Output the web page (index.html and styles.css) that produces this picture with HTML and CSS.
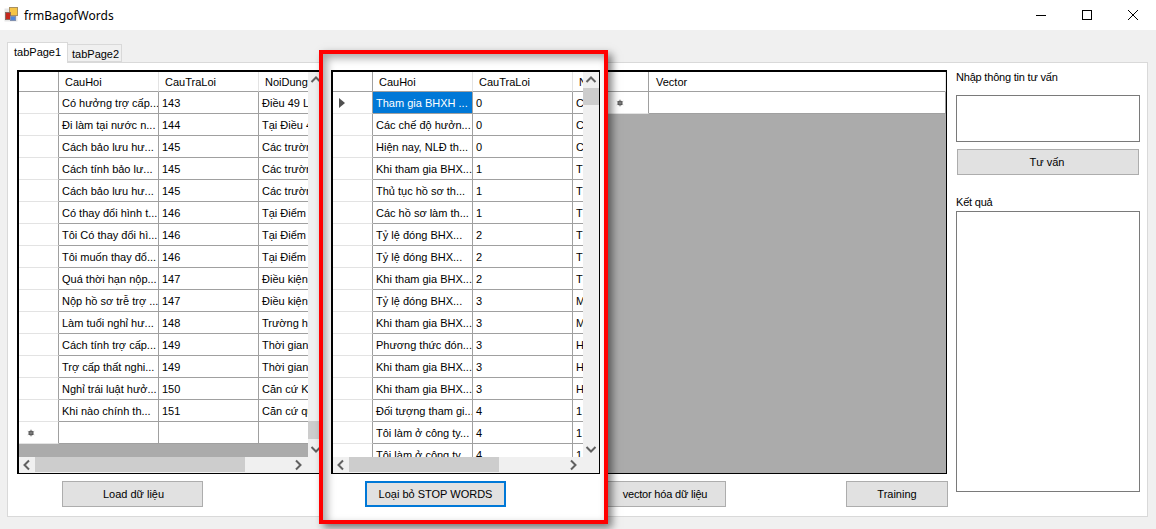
FILE: index.html
```html
<!DOCTYPE html>
<html lang="vi">
<head>
<meta charset="utf-8">
<title>frmBagofWords</title>
<link rel="stylesheet" href="styles.css">
</head>
<body>
<div class="window">
  <header class="titlebar">
    <svg class="app-icon" width="16" height="16" viewBox="0 0 16 16"><rect x="0.5" y="1.5" width="13" height="13" fill="#e6e6e6"/><rect x="5.5" y="0.5" width="8" height="8" fill="#f5c445" stroke="#a89060"/><rect x="1.5" y="5.5" width="5" height="7" fill="#c8281e" stroke="#8a6a60"/><rect x="6.5" y="9.5" width="5" height="4" fill="#4d86dc" stroke="#8090b0"/></svg>
    <span class="title">frmBagofWords</span>
    <div class="win-controls">
      <span class="win-btn"><svg width="12" height="12" viewBox="0 0 12 12"><path d="M1 6.5H11" stroke="#000" fill="none"/></svg></span>
      <span class="win-btn"><svg width="12" height="12" viewBox="0 0 12 12"><rect x="1.5" y="1.5" width="9" height="9" stroke="#000" fill="none"/></svg></span>
      <span class="win-btn"><svg width="12" height="12" viewBox="0 0 12 12"><path d="M1 1L11 11M11 1L1 11" stroke="#000" fill="none"/></svg></span>
    </div>
  </header>
  <main class="client">
    <div class="tabs">
      <span class="tab tab-active">tabPage1</span>
      <span class="tab">tabPage2</span>
    </div>
    <section class="panel">
      <div class="main-col">
        <div class="grids">
          <div class="grid grid-one">
            <div class="grid-top">
              <div class="viewport">
                <table class="dgv">
                  <thead><tr><th class="rh"></th><th>CauHoi</th><th>CauTraLoi</th><th>NoiDung</th></tr></thead>
                  <tbody>
                    <tr><th class="rh"></th><td>Có hưởng trợ cấp...</td><td>143</td><td>Điều 49 Luật</td></tr>
                    <tr><th class="rh"></th><td>Đi làm tại nước n...</td><td>144</td><td>Tại Điều 4</td></tr>
                    <tr><th class="rh"></th><td>Cách bảo lưu hư...</td><td>145</td><td>Các trường</td></tr>
                    <tr><th class="rh"></th><td>Cách tính bảo lư...</td><td>145</td><td>Các trường</td></tr>
                    <tr><th class="rh"></th><td>Cách bảo lưu hư...</td><td>145</td><td>Các trường</td></tr>
                    <tr><th class="rh"></th><td>Có thay đổi hình t...</td><td>146</td><td>Tại Điểm</td></tr>
                    <tr><th class="rh"></th><td>Tôi Có thay đổi hì...</td><td>146</td><td>Tại Điểm</td></tr>
                    <tr><th class="rh"></th><td>Tôi muốn thay đổ...</td><td>146</td><td>Tại Điểm</td></tr>
                    <tr><th class="rh"></th><td>Quá thời hạn nộp...</td><td>147</td><td>Điều kiện</td></tr>
                    <tr><th class="rh"></th><td>Nộp hồ sơ trễ trợ ...</td><td>147</td><td>Điều kiện</td></tr>
                    <tr><th class="rh"></th><td>Làm tuổi nghỉ hư...</td><td>148</td><td>Trường hợp</td></tr>
                    <tr><th class="rh"></th><td>Cách tính trợ cấp...</td><td>149</td><td>Thời gian</td></tr>
                    <tr><th class="rh"></th><td>Trợ cấp thất nghi...</td><td>149</td><td>Thời gian</td></tr>
                    <tr><th class="rh"></th><td>Nghỉ trái luật hưở...</td><td>150</td><td>Căn cứ Khoản</td></tr>
                    <tr><th class="rh"></th><td>Khi nào chính th...</td><td>151</td><td>Căn cứ quy</td></tr>
                    <tr><th class="rh"><svg class="star" width="8" height="8" viewBox="0 0 8 8"><circle cx="4" cy="4" r="2.5" fill="#444"/><path d="M4 .5V7.5M.8 2.2L7.2 5.8M7.2 2.2L.8 5.8" stroke="#888" stroke-width=".8"/></svg></th><td></td><td></td><td></td></tr>
                  </tbody>
                </table>
              </div>
              <div class="vscroll">
                <svg class="arrow" width="16" height="16" viewBox="0 0 16 16"><path d="M3.5 10L8 5.5L12.5 10" stroke="#606060" stroke-width="2" fill="none"/></svg>
                <div class="vthumb vthumb-low"></div>
                <svg class="arrow arrow-end" width="16" height="16" viewBox="0 0 16 16"><path d="M3.5 6L8 10.5L12.5 6" stroke="#606060" stroke-width="2" fill="none"/></svg>
              </div>
            </div>
            <div class="hscroll">
              <svg class="arrow" width="16" height="16" viewBox="0 0 16 16"><path d="M10 3.5L5.5 8L10 12.5" stroke="#606060" stroke-width="2" fill="none"/></svg>
              <div class="hthumb hthumb-wide"></div>
              <svg class="arrow arrow-end" width="16" height="16" viewBox="0 0 16 16"><path d="M6 3.5L10.5 8L6 12.5" stroke="#606060" stroke-width="2" fill="none"/></svg>
              <div class="corner"></div>
            </div>
          </div>

          <div class="grid grid-two">
            <div class="grid-top">
              <div class="viewport">
                <table class="dgv">
                  <thead><tr><th class="rh"></th><th>CauHoi</th><th>CauTraLoi</th><th>NoiDung</th></tr></thead>
                  <tbody>
                    <tr><th class="rh"><svg class="caret" width="6" height="10" viewBox="0 0 6 10"><path d="M0 0L6 5L0 10Z" fill="#505050"/></svg></th><td class="selected">Tham gia BHXH ...</td><td>0</td><td>C</td></tr>
                    <tr><th class="rh"></th><td>Các chế độ hưởn...</td><td>0</td><td>C</td></tr>
                    <tr><th class="rh"></th><td>Hiện nay, NLĐ th...</td><td>0</td><td>C</td></tr>
                    <tr><th class="rh"></th><td>Khi tham gia BHX...</td><td>1</td><td>T</td></tr>
                    <tr><th class="rh"></th><td>Thủ tục hồ sơ th...</td><td>1</td><td>T</td></tr>
                    <tr><th class="rh"></th><td>Các hồ sơ làm th...</td><td>1</td><td>T</td></tr>
                    <tr><th class="rh"></th><td>Tỷ lệ đóng BHX...</td><td>2</td><td>T</td></tr>
                    <tr><th class="rh"></th><td>Tỷ lệ đóng BHX...</td><td>2</td><td>T</td></tr>
                    <tr><th class="rh"></th><td>Khi tham gia BHX...</td><td>2</td><td>T</td></tr>
                    <tr><th class="rh"></th><td>Tỷ lệ đóng BHX...</td><td>3</td><td>M</td></tr>
                    <tr><th class="rh"></th><td>Khi tham gia BHX...</td><td>3</td><td>M</td></tr>
                    <tr><th class="rh"></th><td>Phương thức đón...</td><td>3</td><td>H</td></tr>
                    <tr><th class="rh"></th><td>Khi tham gia BHX...</td><td>3</td><td>H</td></tr>
                    <tr><th class="rh"></th><td>Khi tham gia BHX...</td><td>3</td><td>H</td></tr>
                    <tr><th class="rh"></th><td>Đối tượng tham gi...</td><td>4</td><td>1</td></tr>
                    <tr><th class="rh"></th><td>Tôi làm ở công ty...</td><td>4</td><td>1</td></tr>
                    <tr><th class="rh"></th><td>Tôi làm ở công ty...</td><td>4</td><td>1</td></tr>
                  </tbody>
                </table>
              </div>
              <div class="vscroll">
                <svg class="arrow" width="16" height="16" viewBox="0 0 16 16"><path d="M3.5 10L8 5.5L12.5 10" stroke="#606060" stroke-width="2" fill="none"/></svg>
                <div class="vthumb"></div>
                <svg class="arrow arrow-end" width="16" height="16" viewBox="0 0 16 16"><path d="M3.5 6L8 10.5L12.5 6" stroke="#606060" stroke-width="2" fill="none"/></svg>
              </div>
            </div>
            <div class="hscroll">
              <svg class="arrow" width="16" height="16" viewBox="0 0 16 16"><path d="M10 3.5L5.5 8L10 12.5" stroke="#606060" stroke-width="2" fill="none"/></svg>
              <div class="hthumb"></div>
              <svg class="arrow arrow-end" width="16" height="16" viewBox="0 0 16 16"><path d="M6 3.5L10.5 8L6 12.5" stroke="#606060" stroke-width="2" fill="none"/></svg>
              <div class="corner"></div>
            </div>
          </div>

          <div class="grid grid-three">
            <div class="viewport">
              <table class="dgv dgv-vector">
                <thead><tr><th class="rh"></th><th>Vector</th></tr></thead>
                <tbody>
                  <tr><th class="rh"><svg class="star star-right" width="8" height="8" viewBox="0 0 8 8"><circle cx="4" cy="4" r="2.5" fill="#444"/><path d="M4 .5V7.5M.8 2.2L7.2 5.8M7.2 2.2L.8 5.8" stroke="#888" stroke-width=".8"/></svg></th><td></td></tr>
                </tbody>
              </table>
            </div>
          </div>
        </div>
        <div class="actions">
          <button class="btn btn-load" type="button">Load dữ liệu</button>
          <button class="btn btn-stop" type="button">Loại bỏ STOP WORDS</button>
          <button class="btn btn-vector" type="button">vector hóa dữ liệu</button>
          <button class="btn btn-train" type="button">Training</button>
        </div>
      </div>
      <aside class="side">
        <label class="side-label">Nhập thông tin tư vấn</label>
        <div class="box box-input"></div>
        <button class="btn btn-advise" type="button">Tư vấn</button>
        <label class="side-label side-label-result">Kết quả</label>
        <div class="box box-result"></div>
      </aside>
    </section>
  </main>
</div>
<div class="callout"></div>
</body>
</html>
```
FILE: styles.css
```css
* { box-sizing: border-box; }
html, body { margin: 0; padding: 0; }
body {
  width: 1156px;
  height: 529px;
  overflow: hidden;
  position: relative;
  background: #f0f0f0;
  font-family: "Liberation Sans", Arial, sans-serif;
  font-size: 11px;
  color: #000;
}
.window { display: flex; flex-direction: column; height: 529px; }

.titlebar {
  height: 30px;
  flex: none;
  background: #fff;
  display: flex;
  align-items: center;
  padding-left: 4px;
}
.app-icon { flex: none; }
.title { margin-left: 4px; font-family: "Noto Sans", sans-serif; font-size: 12px; }
.win-controls { margin-left: auto; display: flex; }
.win-btn { width: 46px; height: 30px; display: flex; align-items: center; justify-content: center; }

.client { flex: 1; display: flex; flex-direction: column; padding: 12px 8px 12px 7px; }
.tabs { display: flex; align-items: flex-end; height: 21px; margin-bottom: -1px; position: relative; }
.tab {
  height: 18px;
  padding: 0 4px;
  width: 54px;
  line-height: 18px;
  border: 1px solid #d9d9d9;
  border-left: 0;
  background: #f0f0f0;
  margin-bottom: 1px;
}
.tab-active {
  width: 61px;
  height: 21px;
  padding: 0 6px;
  line-height: 19px;
  border-left: 1px solid #d9d9d9;
  border-bottom: 0;
  background: #fff;
  margin-bottom: 0;
  position: relative;
  z-index: 1;
}
.panel {
  flex: 1;
  min-height: 0;
  background: #fff;
  border: 1px solid #d9d9d9;
  padding: 7px 7px 0 9px;
  display: flex;
  gap: 8px;
}
.main-col { width: 931px; flex: none; display: flex; flex-direction: column; }
.grids { display: flex; height: 404px; }

.grid {
  background: #ababab;
  border: solid #000;
  border-width: 2px 1px 1px 2px;
  display: flex;
  flex-direction: column;
  overflow: hidden;
  flex: none;
}
.grid-one { width: 308px; }
.grid-two { width: 269px; margin-left: 6px; position: relative; z-index: 2; }
.grid-three { width: 344px; margin-left: 3px; }
.grid-top { flex: 1; min-height: 0; display: flex; }
.viewport { flex: 1; min-width: 0; overflow: hidden; }

.dgv { border-collapse: separate; border-spacing: 0; table-layout: fixed; width: 340px; background: #fff; }
.dgv th, .dgv td {
  padding: 0;
  overflow: hidden;
  white-space: nowrap;
  text-align: left;
  font-weight: normal;
}
.dgv td {
  width: 100px;
  height: 22px;
  padding: 0 1px 0 3px;
  border-right: 1px solid #a0a0a0;
  border-bottom: 1px solid #a0a0a0;
}
.dgv thead th {
  width: 100px;
  height: 20px;
  padding: 0 0 0 6px;
  border-right: 1px solid #e3e3e3;
  border-bottom: 1px solid #a0a0a0;
}
.dgv .rh {
  width: 40px;
  padding: 0;
  background: #fff;
  border-right: 1px solid #a0a0a0;
  border-bottom: 1px solid #e3e3e3;
}
.dgv tbody .rh { height: 22px; }
.dgv thead .rh { border-bottom-color: #a0a0a0; }
.dgv td.selected { background: #0078d7; color: #fff; }
.caret { display: block; margin-left: 6px; }
.star { display: block; margin: 1px 0 0 8px; }
.dgv-vector { width: 341px; }
.dgv-vector .rh { width: 44px; }
.dgv-vector td, .dgv-vector thead th:last-child { width: 297px; }
.dgv-vector thead th:last-child { padding-left: 7px; }
.star-right { margin-left: 11px; }

.vscroll { width: 16px; flex: none; background: #f0f0f0; display: flex; flex-direction: column; }
.hscroll { height: 16px; flex: none; background: #f0f0f0; display: flex; }
.arrow { flex: none; display: block; }
.arrow-end { margin: auto 0 0; }
.hscroll .arrow-end { margin: 0 2px 0 auto; }
.vthumb { width: 16px; height: 17px; background: #cdcdcd; }
.vthumb-low { height: 18px; margin-top: 333px; }
.hthumb { width: 150px; height: 15px; background: #cdcdcd; }
.hthumb-wide { width: 210px; }
.corner { width: 16px; flex: none; }

.actions { display: flex; margin-top: 7px; }
.btn {
  height: 26px;
  padding: 0;
  background: #e1e1e1;
  border: 1px solid #adadad;
  border-radius: 0;
  font: inherit;
  color: #000;
  text-align: center;
  flex: none;
}
.btn-load { width: 141px; margin-left: 45px; padding-left: 2px; }
.btn-stop {
  width: 141px;
  margin-left: 162px;
  border: 2px solid #0078d7;
  position: relative;
  z-index: 2;
}
.btn-vector { width: 122px; margin-left: 98px; letter-spacing: -.2px; }
.btn-train { width: 102px; margin-left: 120px; }

.side { width: 184px; flex: none; display: flex; flex-direction: column; }
.side-label { height: 15px; line-height: 15px; display: block; letter-spacing: -.2px; }
.side-label-result { margin-top: 20px; }
.box { background: #fff; border: 1px solid #7a7a7a; }
.box-input { height: 47px; margin-top: 10px; }
.box-result { height: 281px; margin-top: 1px; }
.btn-advise { width: 182px; margin: 7px 0 0 1px; padding-right: 2px; }

.callout {
  position: absolute;
  left: 319px;
  top: 50px;
  width: 289px;
  height: 474px;
  background: #fff;
  border: 4px solid #f00;
  box-shadow: 4px 4px 8px rgba(0, 0, 0, .5), inset 4px 4px 8px rgba(0, 0, 0, .35);
  z-index: 1;
}
```
